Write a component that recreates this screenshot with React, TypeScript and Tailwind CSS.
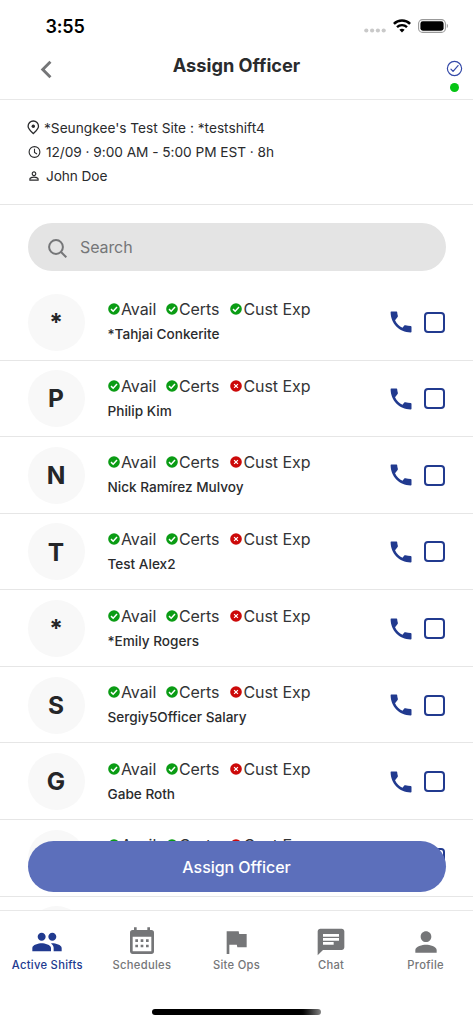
import type { ReactNode } from "react";
import { MdChat, MdChevronLeft, MdFlag, MdGroup, MdPerson, MdPersonOutline } from "react-icons/md";
import { IoCheckmarkCircleOutline } from "react-icons/io5";

function StatusIcon({ ok }: { ok: boolean }) {
  return (
    <svg viewBox="0 0 12 12" className="h-[12px] w-[12px] shrink-0" fill="none">
      <circle cx="6" cy="6" r="5.8" fill={ok ? "#0a9c14" : "#cc0909"} />
      {ok ? (
        <path d="M3 6.1 5.2 8.2 9 4.1" stroke="#fff" strokeWidth="1.5" />
      ) : (
        <path d="m4.1 4.1 3.8 3.8m0-3.8L4.1 7.9" stroke="#fff" strokeWidth="1.2" />
      )}
    </svg>
  );
}

function Status({ ok, label }: { ok: boolean; label: string }) {
  return (
    <div className="flex items-center gap-[1.4px]">
      <StatusIcon ok={ok} />
      <span className="whitespace-nowrap text-[16px] leading-[22px] tracking-[-0.06px] text-[#333436]">{label}</span>
    </div>
  );
}

function PhoneIcon() {
  return (
    <svg viewBox="0 0 24 24" className="mr-[9.5px] h-[28px] w-[28px] text-[#213a8f]" fill="currentColor">
      <path d="M3.1 3.5c0-.3.2-.5.5-.5h4.6c.3 0 .5.2.5.5.1 1.2.3 2.3.6 3.2.1.4 0 .8-.2 1.1l-2.2 2.6c1.4 2.9 3.6 5.2 6.4 6.6l1.5-1.9c.3-.3.7-.4 1.1-.3 1.3.4 2.9.6 4.4.7.4 0 .7.3.7.7V20.4c0 .4-.3.6-.7.6C10.5 21 3.1 13.2 3.1 3.5Z" />
    </svg>
  );
}

function OfficerRow({ initial, name, exp }: { initial: string; name: string; exp: boolean }) {
  return (
    <div className="flex h-[76.57px] shrink-0 items-center border-b-[1.5px] border-[#e6e6e6] pl-[27.5px] pr-[28px] pt-[1px]">
      <div className="flex h-[57px] w-[57px] items-center justify-center rounded-full bg-[#f8f8f8] text-[24.5px] font-bold text-[#252628]">
        {initial}
      </div>
      <div className="ml-[23px] flex-1 pb-[2px]">
        <div className="grid grid-cols-[58px_64.5px_1fr]">
          <Status ok label="Avail" />
          <Status ok label="Certs" />
          <Status ok={exp} label="Cust Exp" />
        </div>
        <div className="mt-[4px] h-[20px] text-[13.6px] font-medium leading-[20px] text-[#2a2b2d]">{name}</div>
      </div>
      <PhoneIcon />
      <div className="h-[21px] w-[21px] rounded-[4px] border-[2px] border-[#213a8f]" />
    </div>
  );
}

const officers = [
  { initial: "*", name: "*Tahjai Conkerite", exp: true },
  { initial: "P", name: "Philip Kim", exp: false },
  { initial: "N", name: "Nick Ramírez Mulvoy", exp: false },
  { initial: "T", name: "Test Alex2", exp: false },
  { initial: "*", name: "*Emily Rogers", exp: false },
  { initial: "S", name: "Sergiy5Officer Salary", exp: false },
  { initial: "G", name: "Gabe Roth", exp: false },
  { initial: "", name: "", exp: false },
];

function Tab({ icon, label, active = false }: { icon: ReactNode; label: string; active?: boolean }) {
  return (
    <div className={active ? "flex flex-1 flex-col items-center text-[#213a8f]" : "flex flex-1 flex-col items-center text-[#757678]"}>
      <div className="h-[32px] w-[32px]">{icon}</div>
      <span className="whitespace-nowrap text-[11.2px] font-medium leading-[14px] tracking-[0.3px]">{label}</span>
    </div>
  );
}

export default function App() {
  return (
    <div className="relative flex h-[1024px] w-[473px] flex-col overflow-hidden bg-white font-['Inter',sans-serif] text-[#2a2b2d]">
      <header className="h-[99.5px] shrink-0 border-b-[1.5px] border-[#e8e8e8]">
        <div className="flex h-[52px] items-center pl-[45.5px] pr-[24px]">
          <span className="pt-[2px] text-[18px] font-semibold leading-[22px] tracking-[-0.2px] text-black">3:55</span>
          <div className="ml-auto flex items-center">
            <svg viewBox="0 0 22 5" className="mr-[7px] mt-[9px] h-[5px] w-[22px]" fill="#c9c9c9">
              <circle cx="2.3" cy="2.5" r="2.1" />
              <circle cx="8.1" cy="2.5" r="2.1" />
              <circle cx="13.9" cy="2.5" r="2.1" />
              <circle cx="19.7" cy="2.5" r="2.1" />
            </svg>
            <svg viewBox="0 0 18 14" className="mr-[7px] h-[14px] w-[18px]" fill="none" stroke="#000">
              <path d="M.9 4.9C5.3.4 12.7.4 17.1 4.9" strokeWidth="2.5" />
              <path d="M4 8.1C6.8 5.4 11.2 5.4 14 8.1" strokeWidth="2.4" />
              <path d="M9 13.4 6.4 10.8C7.9 9.5 10.1 9.5 11.6 10.8Z" fill="#000" stroke="none" />
            </svg>
            <svg viewBox="0 0 31 14" className="h-[14px] w-[31px]" fill="none">
              <rect x=".6" y=".6" width="26.8" height="12.8" rx="4" stroke="#999" strokeWidth="1.1" />
              <rect x="2.4" y="2.3" width="23.2" height="9.4" rx="2.4" fill="#000" />
              <path d="M28.8 4.8c1.5.6 1.5 3.8 0 4.4Z" fill="#999" />
            </svg>
          </div>
        </div>
        <div className="grid grid-cols-[100px_1fr_100px]">
          <div className="pl-[28.5px]">
            <MdChevronLeft className="h-[35px] w-[35px] text-[#757678]" />
          </div>
          <h1 className="pt-[1px] text-center text-[18.2px] font-bold leading-[24px]">Assign Officer</h1>
          <div className="flex flex-col items-center gap-[4.5px] pl-[63px] pt-[7px]">
            <IoCheckmarkCircleOutline className="h-[19px] w-[19px] text-[#3449a8]" />
            <span className="h-[9.5px] w-[9.5px] rounded-full bg-[#05c414]" />
          </div>
        </div>
      </header>

      <section className="flex h-[105px] shrink-0 flex-col border-b-[1.5px] border-[#e6e6e6] pl-[27px] pt-[16px] text-[13.7px] leading-[24px]">
        <div className="flex items-center">
          <svg viewBox="0 0 13 15" className="mr-[4px] h-[15px] w-[13px]" fill="none" stroke="#2a2b2d" strokeWidth="1.3">
            <path d="M6.3 13.6C4.5 11.8 1.1 9 1.1 6.2a5.2 5.2 0 0 1 10.4 0c0 2.8-3.4 5.6-5.2 7.4Z" />
            <circle cx="6.3" cy="6.2" r="1.7" fill="#2a2b2d" stroke="none" />
          </svg>
          *Seungkee's Test Site : *testshift4
        </div>
        <div className="flex items-center tracking-[-0.04px]">
          <svg viewBox="0 0 14 14" className="ml-[1px] mr-[4px] h-[14px] w-[14px]" fill="none" stroke="#2a2b2d" strokeWidth="1.1">
            <circle cx="6.5" cy="7" r="5.4" />
            <path d="M6.5 3.8V7.4L9 9" />
          </svg>
          12/09 · 9:00 AM - 5:00 PM EST · 8h
        </div>
        <div className="flex items-center tracking-[-0.1px]">
          <MdPersonOutline className="mr-[5px] h-[14px] w-[14px]" />
          John Doe
        </div>
      </section>

      <div className="flex h-[79.5px] shrink-0 px-[27.5px] pt-[18.5px]">
        <div className="flex h-[48px] w-full items-center rounded-full bg-[#e4e4e4] pl-[20px] text-[16px] tracking-[-0.1px] text-[#757678]">
          <svg viewBox="0 0 19 19" className="mr-[13.5px] mt-[2px] h-[19px] w-[19px]" fill="none" stroke="#757678" strokeWidth="2">
            <circle cx="8" cy="8" r="6.9" />
            <path d="m12.8 12.8 5.5 5.5" />
          </svg>
          Search
        </div>
      </div>

      <main className="flex min-h-0 flex-1 flex-col overflow-hidden">
        {officers.map((officer, index) => (
          <OfficerRow key={index} {...officer} />
        ))}
        <div className="shrink-0 pl-[27.5px] pt-[9.5px]">
          <div className="h-[57px] w-[57px] rounded-full bg-[#f8f8f8]" />
        </div>
      </main>

      <button className="absolute left-[27.5px] top-[841px] h-[51px] w-[418px] rounded-full bg-[#5c6fbb] text-[16px] font-medium tracking-[-0.05px] text-white">
        Assign Officer
      </button>

      <nav className="flex h-[114px] shrink-0 flex-col items-center border-t border-[#e8e8e8] bg-white pt-[15px]">
        <div className="flex w-full">
          <Tab active label="Active Shifts" icon={<MdGroup className="h-[32px] w-[32px]" />} />
          <Tab
            label="Schedules"
            icon={
              <svg viewBox="0 0 24 24" fill="currentColor" className="h-[32px] w-[32px]">
                <path d="M9,10V12H7V10H9M13,10V12H11V10H13M17,10V12H15V10H17M19,3A2,2 0 0,1 21,5V19A2,2 0 0,1 19,21H5C3.89,21 3,20.1 3,19V5A2,2 0 0,1 5,3H6V1H8V3H16V1H18V3H19M19,19V8H5V19H19M9,14V16H7V14H9M13,14V16H11V14H13M17,14V16H15V14H17Z" />
              </svg>
            }
          />
          <Tab label="Site Ops" icon={<MdFlag className="h-[32px] w-[32px]" />} />
          <Tab label="Chat" icon={<MdChat className="h-[32px] w-[32px]" />} />
          <Tab label="Profile" icon={<MdPerson className="h-[32px] w-[32px]" />} />
        </div>
        <div className="mb-[9px] mt-auto h-[6px] w-[169px] rounded-full bg-linear-to-r from-black from-87% to-[#858585]" />
      </nav>
    </div>
  );
}
